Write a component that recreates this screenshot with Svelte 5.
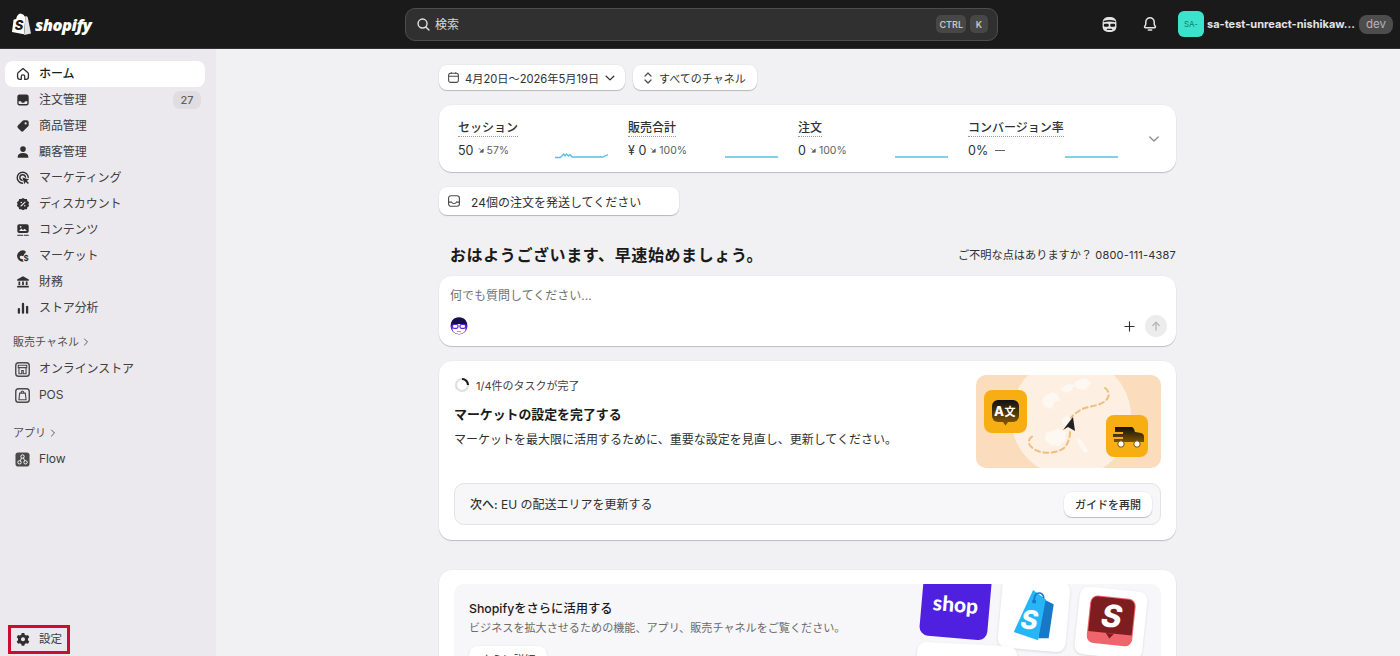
<script>
  const nav = [
    { label: 'ホーム', icon: 'home', active: true },
    { label: '注文管理', icon: 'inbox', badge: '27' },
    { label: '商品管理', icon: 'tag' },
    { label: '顧客管理', icon: 'person' },
    { label: 'マーケティング', icon: 'target' },
    { label: 'ディスカウント', icon: 'discount' },
    { label: 'コンテンツ', icon: 'content' },
    { label: 'マーケット', icon: 'globe' },
    { label: '財務', icon: 'bank' },
    { label: 'ストア分析', icon: 'chart' }
  ];
  const metrics = [
    { label: 'セッション', value: '50', delta: '57%', arrow: true, spark: 'M0 6.5H5L7 5 8.500 3 10 5 11.500 3 13.500 5 15 3.500 17 6H48L53 3.500' },
    { label: '販売合計', value: '¥ 0', delta: '100%', arrow: true, spark: 'M0 6H53' },
    { label: '注文', value: '0', delta: '100%', arrow: true, spark: 'M0 6H53' },
    { label: 'コンバージョン率', value: '0%', delta: '', arrow: false, spark: 'M0 6H53' }
  ];
</script>

{#snippet navIcon(name)}
  <svg class="nav-icon" viewBox="0 0 16 16" aria-hidden="true">
    {#if name === 'home'}
      <path d="M8 1.800 2.300 6.700A1.800 1.800 0 0 0 1.800 8v3.500a2.700 2.700 0 0 0 2.700 2.700H6V11a2 2 0 0 1 4 0v3.200h1.500a2.700 2.700 0 0 0 2.700-2.700V8a1.800 1.800 0 0 0-.5-1.300Z" fill="none" stroke="#303030" stroke-width="1.500" stroke-linejoin="round"/>
    {:else if name === 'inbox'}
      <path d="M4 1.800h8A2.500 2.500 0 0 1 14.500 4.300v7.400A2.500 2.500 0 0 1 12 14.200H4a2.500 2.500 0 0 1-2.500-2.500V4.300A2.500 2.500 0 0 1 4 1.800Z" fill="#303030"/>
      <path d="M3 9.300h2.600c.5 1.200 1.300 1.700 2.400 1.700s1.900-.5 2.400-1.700H13v2.200a1 1 0 0 1-1 1.100H4a1 1 0 0 1-1-1.100Z" fill="#ebe9ed"/>
    {:else if name === 'tag'}
      <path d="M9 1.500h3.200a2.300 2.300 0 0 1 2.300 2.300V7a2 2 0 0 1-.6 1.400l-5.400 5.400a2 2 0 0 1-2.800 0l-3.500-3.500a2 2 0 0 1 0-2.800L7.600 2.100A2 2 0 0 1 9 1.500Z" fill="#303030"/>
      <circle cx="11" cy="5" r="1.200" fill="#ebe9ed"/>
    {:else if name === 'person'}
      <circle cx="8" cy="4.700" r="3.200" fill="#303030"/>
      <path d="M2 13c0-2.400 2.200-4 6-4s6 1.600 6 4v1.500H2Z" fill="#303030"/>
    {:else if name === 'target'}
      <path d="M7.500 14A6.300 6.300 0 1 1 14 7.500" fill="none" stroke="#303030" stroke-width="1.600" stroke-linecap="round"/>
      <path d="M7 10.600A3.200 3.200 0 1 1 10.800 7" fill="none" stroke="#303030" stroke-width="1.600" stroke-linecap="round"/>
      <path d="M7.300 7.300 15 9.700 12.300 11 14.800 13.600 13.500 14.900 11 12.300 9.700 15Z" fill="#303030"/>
    {:else if name === 'discount'}
      <path d="M8 1 10 2.300 12.400 2.300 13 4.500 15 6 14.200 8.200 15 10.400 13 11.600 12.400 13.900 10 13.900 8 15.200 6 13.900 3.600 13.900 3 11.600 1 10.400 1.800 8.200 1 6 3 4.500 3.600 2.300 6 2.300Z" fill="#303030"/>
      <path d="M5.700 10.300 10.300 5.800" stroke="#ebe9ed" stroke-width="1.300" stroke-linecap="round"/>
      <circle cx="6" cy="6.200" r=".9" fill="#ebe9ed"/><circle cx="10" cy="10" r=".9" fill="#ebe9ed"/>
    {:else if name === 'content'}
      <path d="M3.500 1.500h9A2 2 0 0 1 14.500 3.500v6a2 2 0 0 1-2 2h-9a2 2 0 0 1-2-2v-6a2 2 0 0 1 2-2Z" fill="#303030"/>
      <path d="M3.500 9.200 6 6.300 8 8l2-1.500 2.500 2.700Z" fill="#ebe9ed"/><circle cx="5.300" cy="4.300" r="1" fill="#ebe9ed"/>
      <path d="M2 14h5.500M9.500 14H14" stroke="#303030" stroke-width="1.400" stroke-linecap="round"/>
    {:else if name === 'globe'}
      <path d="M10.700 2.200A6.500 6.500 0 1 0 8.800 14.400a4.200 4.200 0 0 1-1.300-2.900c-1.400.3-2.700-.4-3.200-1.700-.4-1.200.5-2.200 1.800-2.200 1 0 1.600.5 2.400.2.800-.4.500-1.200 1-2 .4-.7 1-1.100 1.700-1.400Z" fill="#303030"/>
      <text x="11.600" y="13.600" font-size="9" font-weight="700" text-anchor="middle" fill="#303030" font-family="Inter, sans-serif">$</text>
    {:else if name === 'bank'}
      <path d="M8 1.300 14.700 5v1.500H1.300V5Z" fill="#303030"/>
      <path d="M2.800 7.500h2v4h-2ZM7 7.500h2v4H7ZM11.200 7.500h2v4h-2Z" fill="#303030"/>
      <rect x="1.300" y="12.300" width="13.400" height="2" rx=".6" fill="#303030"/>
    {:else if name === 'chart'}
      <rect x="2" y="8" width="2.600" height="6.500" rx="1.200" fill="#303030"/>
      <rect x="6.700" y="2" width="2.600" height="12.500" rx="1.200" fill="#303030"/>
      <rect x="11.400" y="5.500" width="2.600" height="9" rx="1.200" fill="#303030"/>
    {/if}
  </svg>
{/snippet}

{#snippet caret()}
  <svg class="caret" viewBox="0 0 6 8" aria-hidden="true"><path d="m1.500 1 3 3-3 3" fill="none" stroke="#5a5a5a" stroke-width="1" stroke-linecap="round" stroke-linejoin="round"/></svg>
{/snippet}

<div class="app">
  <header class="topbar">
    <div class="logo">
      <svg class="bag" viewBox="0 0 20 23" aria-hidden="true">
        <path d="M13.500 3.300 12.600 3.600C12.200 2.300 11.500 1.300 10.300 1.300H10C9.600.8 9.200.6 8.800.6 6 .6 4.600 4.100 4.200 5.900L2.200 6.500C1.600 6.700 1.600 6.700 1.500 7.300L0 19 11.900 21.300Z" fill="#fff"/>
        <path d="M14.300 3.200 13.500 3.300 12.100 21.900 19 20.400 15.800 4.500C15.700 3.900 14.800 3.200 14.300 3.200Z" fill="#e3e3e3"/>
        <text x="7.100" y="17.300" font-size="13" font-weight="800" font-style="italic" fill="#1a1a1a" text-anchor="middle" font-family="Inter, sans-serif">S</text>
      </svg>
      <span class="wordmark">shopify</span>
    </div>
    <div class="search">
      <svg class="search-icon" viewBox="0 0 16 16" aria-hidden="true"><circle cx="7" cy="7" r="4.800" fill="none" stroke="#e3e3e3" stroke-width="1.500"/><path d="m10.600 10.600 3.200 3.200" stroke="#e3e3e3" stroke-width="1.500" stroke-linecap="round"/></svg>
      <span class="search-text">検索</span>
      <span class="key">CTRL</span>
      <span class="key key-k">K</span>
    </div>
    <div class="top-right">
      <svg class="sidekick" viewBox="0 0 16 16" aria-hidden="true">
        <path d="M8 1c4.200 0 6.500 1.700 6.500 5.500v3.500c0 3.200-2.600 5-6.500 5s-6.500-1.800-6.500-5V6.500C1.500 2.700 3.800 1 8 1Z" fill="#e3e3e3"/>
        <path d="M2.500 5.300c3.500-1 7.500-1 11 0" stroke="#1a1a1a" stroke-width="1.400" fill="none"/>
        <rect x="2.700" y="7.200" width="4.600" height="3" rx="1.200" fill="#1a1a1a"/>
        <rect x="8.700" y="7.200" width="4.600" height="3" rx="1.200" fill="#1a1a1a"/>
        <path d="M5.500 12.600h5" stroke="#1a1a1a" stroke-width="1.100"/>
      </svg>
      <svg class="bell" viewBox="0 0 16 16" aria-hidden="true">
        <path d="M8 1.800a4.200 4.200 0 0 0-4.200 4.200v1.800c0 1-.4 1.700-1 2.500-.5.700-.2 1.400.6 1.400h9.200c.8 0 1.100-.7.600-1.400-.6-.8-1-1.500-1-2.500V6A4.200 4.200 0 0 0 8 1.800Z" fill="none" stroke="#e3e3e3" stroke-width="1.500"/>
        <path d="M6.300 14h3.400" stroke="#e3e3e3" stroke-width="1.500" stroke-linecap="round"/>
      </svg>
      <span class="avatar">SA-</span>
      <span class="store">sa-test-unreact-nishikaw...</span>
      <span class="dev">dev</span>
    </div>
  </header>

  <div class="body">
    <aside class="sidebar">
      <nav class="nav-group">
        {#each nav as item}
          <div class="nav-item" class:active={item.active}>
            {@render navIcon(item.icon)}
            <span class="nav-label">{item.label}</span>
            {#if item.badge}<span class="badge">{item.badge}</span>{/if}
          </div>
        {/each}
      </nav>

      <div class="section-head first">販売チャネル {@render caret()}</div>
      <div class="nav-item">
        <svg class="nav-icon app-icon" viewBox="0 0 16 16" aria-hidden="true">
          <rect x=".8" y=".8" width="14.400" height="14.400" rx="3" fill="none" stroke="#4a4a4a" stroke-width="1.500"/>
          <path d="M3.500 3.500h9v2.500h-9ZM4.200 6v6.500h3V9h1.600v3.500h3V6" fill="none" stroke="#4a4a4a" stroke-width="1.200"/>
        </svg>
        <span class="nav-label">オンラインストア</span>
      </div>
      <div class="nav-item">
        <svg class="nav-icon app-icon" viewBox="0 0 16 16" aria-hidden="true">
          <rect x=".8" y=".8" width="14.400" height="14.400" rx="3" fill="none" stroke="#4a4a4a" stroke-width="1.500"/>
          <path d="M5 5.500h6l.8 7H4.200ZM6.500 5.500c0-3 3-3 3 0" fill="none" stroke="#4a4a4a" stroke-width="1.200"/>
        </svg>
        <span class="nav-label latin">POS</span>
      </div>

      <div class="section-head second">アプリ {@render caret()}</div>
      <div class="nav-item">
        <svg class="nav-icon app-icon" viewBox="0 0 16 16" aria-hidden="true">
          <rect x=".5" y=".5" width="15" height="15" rx="3" fill="#4a4a4a"/>
          <circle cx="8" cy="4.800" r="1.800" fill="none" stroke="#fff" stroke-width="1"/>
          <circle cx="4.800" cy="11" r="1.800" fill="none" stroke="#fff" stroke-width="1"/>
          <circle cx="11.200" cy="11" r="1.800" fill="none" stroke="#fff" stroke-width="1"/>
          <path d="M7 6.400 5.600 9.400M9 6.400l1.400 3" stroke="#fff" stroke-width="1"/>
        </svg>
        <span class="nav-label latin">Flow</span>
      </div>

      <div class="settings">
        <svg class="nav-icon gear" viewBox="0 0 16 16" aria-hidden="true">
          <path fill-rule="evenodd" d="M6.500 1h3l.5 2 1.700 1 2-.6 1.500 2.600-1.500 1.400v2l1.500 1.400-1.500 2.600-2-.6-1.700 1-.5 2h-3l-.5-2-1.700-1-2 .6L.8 10.800l1.500-1.400v-2L.8 6l1.500-2.600 2 .6 1.700-1ZM8 6a2.300 2.300 0 1 0 0 4.600A2.300 2.300 0 0 0 8 6Z" fill="#303030"/>
        </svg>
        <span class="nav-label">設定</span>
      </div>
    </aside>

    <main class="main">
      <div class="filters">
        <button class="pill date">
          <svg class="pill-icon" viewBox="0 0 16 16" aria-hidden="true"><rect x="2" y="2.800" width="12" height="11.200" rx="2.500" fill="none" stroke="#4a4a4a" stroke-width="1.300"/><path d="M2 6.500h12M5.300 1.500v2M10.700 1.500v2" stroke="#4a4a4a" stroke-width="1.300"/></svg>
          <span>4月20日〜2026年5月19日</span>
          <svg class="chev" viewBox="0 0 12 12" aria-hidden="true"><path d="m2.200 4.300 3.800 3.600 3.800-3.600" fill="none" stroke="#303030" stroke-width="1.300" stroke-linecap="round" stroke-linejoin="round"/></svg>
        </button>
        <button class="pill channel">
          <svg class="updown" viewBox="0 0 12 14" aria-hidden="true"><path d="m3 5 3-3 3 3M3 9l3 3 3-3" fill="none" stroke="#4a4a4a" stroke-width="1.200" stroke-linecap="round" stroke-linejoin="round"/></svg>
          <span>すべてのチャネル</span>
        </button>
      </div>

      <section class="card metrics">
        {#each metrics as m}
          <div class="metric">
            <div class="metric-text">
              <span class="metric-label">{m.label}</span>
              <div class="metric-value">
                <span class="val">{m.value}</span>
                {#if m.arrow}
                  <svg class="down" viewBox="0 0 8 8" aria-hidden="true"><path d="M1 1.500 6 6.500M7 2.500v4.500H2.500Z" fill="#616161" stroke="#616161" stroke-width="1"/></svg>
                  <span class="delta">{m.delta}</span>
                {:else}
                  <span class="dash"></span>
                {/if}
              </div>
            </div>
            <svg class="spark" viewBox="0 0 53 8" aria-hidden="true"><path d={m.spark} fill="none" stroke="#56bfe6" stroke-width="1.300"/></svg>
          </div>
        {/each}
        <svg class="metrics-chev" viewBox="0 0 12 12" aria-hidden="true"><path d="m1.800 4 4.200 4 4.200-4" fill="none" stroke="#8a8a8a" stroke-width="1.300" stroke-linecap="round" stroke-linejoin="round"/></svg>
      </section>

      <button class="pill alert">
        <svg class="pill-icon alert-icon" viewBox="0 0 16 16" aria-hidden="true"><rect x="1.800" y="2" width="12.400" height="12" rx="2.800" fill="none" stroke="#4a4a4a" stroke-width="1.300"/><path d="M2 9.300h3.200c.4 1 1.500 1.500 2.800 1.500s2.400-.5 2.800-1.500H14" fill="none" stroke="#4a4a4a" stroke-width="1.300"/></svg>
        <span>24個の注文を発送してください</span>
      </button>

      <div class="greeting">
        <h1>おはようございます、早速始めましょう。</h1>
        <span class="help">ご不明な点はありますか？ <span class="phone">0800-111-4387</span></span>
      </div>

      <section class="card ask">
        <div class="placeholder">何でも質問してください...</div>
        <div class="ask-row">
          <svg class="face" viewBox="0 0 18 18" aria-hidden="true">
            <circle cx="9" cy="9" r="8.500" fill="#5b21d9"/>
            <path d="M1 8.500C1 3 4 .5 9 .5s8 2.500 8 8c-4-2-12-2-16 0Z" fill="#15104a"/>
            <ellipse cx="9" cy="12" rx="6.500" ry="5" fill="#fff"/>
            <rect x="2.500" y="7.500" width="5.500" height="3.800" rx="1.500" fill="#fff" stroke="#5b21d9" stroke-width="1.200"/>
            <rect x="10" y="7.500" width="5.500" height="3.800" rx="1.500" fill="#fff" stroke="#5b21d9" stroke-width="1.200"/>
            <path d="M7 14.500h4" stroke="#888" stroke-width=".8"/>
          </svg>
          <span class="grow"></span>
          <svg class="plus" viewBox="0 0 12 12" aria-hidden="true"><path d="M6 1v10M1 6h10" stroke="#303030" stroke-width="1.200" stroke-linecap="round"/></svg>
          <span class="send"><svg viewBox="0 0 12 12" aria-hidden="true"><path d="M6 10V2.500M2.800 5.500 6 2.300l3.200 3.200" fill="none" stroke="#b5b5b5" stroke-width="1.300" stroke-linecap="round" stroke-linejoin="round"/></svg></span>
        </div>
      </section>

      <section class="card task">
        <div class="task-top">
          <div class="task-copy">
            <div class="progress">
              <svg class="ring" viewBox="0 0 16 16" aria-hidden="true">
                <circle cx="8" cy="8" r="6" fill="none" stroke="#e0e0e0" stroke-width="2.200"/>
                <path d="M8 2a6 6 0 0 1 6 6" fill="none" stroke="#1a1a1a" stroke-width="2.200"/>
              </svg>
              <span>1/4件のタスクが完了</span>
            </div>
            <h2>マーケットの設定を完了する</h2>
            <p>マーケットを最大限に活用するために、重要な設定を見直し、更新してください。</p>
          </div>
          <svg class="illustration" viewBox="0 0 185 93" aria-hidden="true">
            <defs>
              <clipPath id="ill"><rect width="185" height="93" rx="10"/></clipPath>
              <linearGradient id="glyph" x1="0" y1="0" x2="0" y2="1"><stop offset="0" stop-color="#111"/><stop offset="1" stop-color="#7a5200"/></linearGradient>
            </defs>
            <g clip-path="url(#ill)">
              <rect width="185" height="93" fill="#fbdcbc"/>
              <circle cx="95" cy="42" r="60" fill="#fdf0e2"/>
              <g fill="#fff" opacity=".55">
                <path d="M68 22l8-5 5 2 3 6-6 3-2 6-7-2-3-5ZM84 14l8-5 6 1-2 5-6 3ZM100 6l10-3 5 5-6 7-7-1-4-4ZM70 58l12-4 8 3-1 8-6 6-8-1-6-5ZM100 62l6 4 6 10-3 2-6-7ZM86 44l5-3 4 2-2 6-6 1Z"/>
              </g>
              <path d="M129 13c6 4 5 12-5 16-8 3-16 3-21 7-3 2-6 4-8 7M94 57c0 6-2 11-5 15-5 5-15 7-24 5-7-2-13-6-12-11 0-2 2-4 4-5" fill="none" stroke="#efbd80" stroke-width="2" stroke-dasharray="5 3.500" stroke-linecap="round"/>
              <path d="M97 42 99 56 92 52 87 55Z" fill="#222"/>
              <rect x="8" y="15" width="43" height="43" rx="8" fill="#f7ae12"/>
              <rect x="16" y="25" width="27" height="22" rx="6" fill="url(#glyph)"/>
              <path d="M27 47h5l-2.500 3.500Z" fill="#7a5200"/>
              <text x="23" y="41" font-size="13" font-weight="800" fill="#fff" text-anchor="middle" font-family="Inter, sans-serif">A</text>
              <text x="34" y="41" font-size="11" font-weight="700" fill="#fff" text-anchor="middle" font-family="'Noto Sans CJK JP', sans-serif">文</text>
              <rect x="130" y="40" width="42" height="42" rx="8" fill="#f7ae12"/>
              <path d="M139 52h16c2 0 3 1 4 5l6 1c2 .5 3 2 3 4v5h-30v-3h9v-2h-10v-3h10v-2h-8Z" fill="url(#glyph)"/>
              <circle cx="145" cy="69" r="3.200" fill="#fff" stroke="#7a5200"/><circle cx="161" cy="69" r="3.200" fill="#fff" stroke="#7a5200"/>
            </g>
          </svg>
        </div>
        <div class="next">
          <span class="next-text"><b>次へ:</b> EU の配送エリアを更新する</span>
          <button class="pill guide">ガイドを再開</button>
        </div>
      </section>

      <section class="card more">
        <div class="more-inner">
          <div class="more-copy">
            <h3>Shopifyをさらに活用する</h3>
            <p>ビジネスを拡大させるための機能、アプリ、販売チャネルをご覧ください。</p>
            <button class="pill explore">さらに詳細</button>
          </div>
          <div class="tile shop"><span>shop</span></div>
          <div class="tile tile-white shopify-tile">
            <svg viewBox="0 0 40 52" aria-hidden="true">
              <path d="M28 10 38 14 36 47 26 48Z" fill="#1878c8"/>
              <path d="M17 2 30 10 26 50 2 44Z" fill="#27b6f5"/>
              <path d="M19 12c-1-9 8-10 9-3" fill="none" stroke="#1878c8" stroke-width="1.600"/>
              <circle cx="19" cy="13" r="2" fill="#1878c8"/>
              <text x="16" y="40" font-size="25" font-weight="800" font-style="italic" fill="#fff" text-anchor="middle" font-family="Inter, sans-serif">S</text>
            </svg>
          </div>
          <div class="tile tile-white red-tile">
            <svg viewBox="0 0 46 52" aria-hidden="true">
              <rect x="1" y="1" width="44" height="46" rx="7" fill="#f0646c"/>
              <path d="M2 8a6 6 0 0 1 6-6h30a6 6 0 0 1 6 6v28H2Z" fill="#7e1d1f"/>
              <path d="M19 36h8l-4 5Z" fill="#7e1d1f"/>
              <text x="23" y="30" font-size="30" font-weight="800" font-style="italic" fill="#fff" text-anchor="middle" font-family="Inter, sans-serif">S</text>
            </svg>
          </div>
          <div class="tile tile-white bottom-tile"></div>
        </div>
      </section>
    </main>
  </div>
</div>

<style>
  :global(body) {
    margin: 0;
    background: #f1f0f2;
  }
  .app {
    width: 1400px;
    height: 656px;
    overflow: hidden;
    display: flex;
    flex-direction: column;
    font-family: Inter, "Noto Sans CJK JP", sans-serif;
    color: #303030;
    font-size: 12px;
  }
  .topbar {
    height: 49px;
    flex: none;
    background: #1a1a1a;
    display: flex;
    align-items: center;
    position: relative;
    border-bottom: 1px solid #333;
    box-sizing: border-box;
  }
  .logo {
    width: 405px;
    flex: none;
    display: flex;
    align-items: center;
    padding-left: 12px;
    box-sizing: border-box;
    gap: 3px;
  }
  .bag {
    width: 20px;
    height: 23px;
  }
  .wordmark {
    color: #fff;
    font-family: "Open Sans", sans-serif;
    font-weight: 800;
    font-style: italic;
    font-size: 16.500px;
    letter-spacing: -0.500px;
  }
  .search {
    width: 593px;
    height: 33px;
    flex: none;
    box-sizing: border-box;
    background: #303030;
    border: 1px solid #4d4d4d;
    border-radius: 10px;
    display: flex;
    align-items: center;
    padding: 0 9px 0 10px;
    gap: 3px;
  }
  .search-icon {
    width: 15px;
    height: 15px;
    margin-right: 1px;
  }
  .search-text {
    color: #d8d8d8;
    font-size: 12px;
    flex: 1;
    padding-bottom: 2px;
  }
  .key {
    background: #474747;
    color: #c4c4c4;
    font-size: 9px;
    font-weight: 600;
    height: 18px;
    min-width: 18px;
    padding: 0 3px;
    box-sizing: border-box;
    border-radius: 5px;
    display: flex;
    align-items: center;
    justify-content: center;
  }
  .key-k {
    margin-left: 1px;
  }
  .top-right {
    display: flex;
    align-items: center;
    margin-left: 103px;
  }
  .sidekick {
    width: 17px;
    height: 17px;
  }
  .bell {
    width: 16px;
    height: 16px;
    margin-left: 24px;
  }
  .avatar {
    width: 26px;
    height: 26px;
    margin-left: 20px;
    border-radius: 6px;
    background: #3be3cc;
    color: #14806f;
    font-size: 8px;
    display: flex;
    align-items: center;
    justify-content: center;
  }
  .store {
    color: #e3e3e3;
    font-weight: 700;
    font-size: 11px;
    margin-left: 3px;
    white-space: nowrap;
    width: 152px;
  }
  .dev {
    background: #4d4d4d;
    color: #b5b5b5;
    font-size: 11.500px;
    height: 19px;
    width: 34px;
    border-radius: 8px;
    display: flex;
    align-items: center;
    justify-content: center;
  }
  .body {
    flex: 1;
    display: flex;
    min-height: 0;
  }
  .sidebar {
    width: 216px;
    flex: none;
    background: #ebe9ed;
    padding: 12px 11px 2px 5px;
    box-sizing: border-box;
    display: flex;
    flex-direction: column;
  }
  .nav-group {
    display: flex;
    flex-direction: column;
  }
  .nav-item {
    height: 26px;
    flex: none;
    display: flex;
    align-items: center;
    padding: 0 4px 0 11px;
    border-radius: 8px;
    font-size: 12px;
    color: #404040;
  }
  .nav-item.active {
    background: #fff;
    color: #1a1a1a;
    font-weight: 500;
  }
  .nav-icon {
    width: 14px;
    height: 14px;
    flex: none;
    margin-right: 9px;
  }
  .app-icon {
    width: 15px;
    height: 15px;
    margin-left: -1px;
  }
  .nav-label {
    flex: 1;
    white-space: nowrap;
    letter-spacing: -0.100px;
    padding-bottom: 3px;
  }
  .nav-label.latin {
    padding-bottom: 2px;
  }
  .badge {
    background: #dfdde1;
    color: #616161;
    font-size: 11px;
    font-weight: 500;
    border-radius: 7px;
    width: 28px;
    height: 18px;
    display: flex;
    align-items: center;
    justify-content: center;
  }
  .section-head {
    height: 16px;
    padding-left: 8px;
    font-size: 11px;
    color: #4f4f4f;
    display: flex;
    align-items: center;
    gap: 4px;
  }
  .section-head.first {
    margin: 12px 0 7px;
  }
  .section-head.second {
    margin: 16px 0 6px;
  }
  .caret {
    width: 6px;
    height: 8px;
    margin-top: 2px;
  }
  .settings {
    margin-top: auto;
    margin-left: 3px;
    width: 62px;
    height: 29px;
    box-sizing: border-box;
    border: 3px solid #c80f2e;
    display: flex;
    align-items: center;
    padding-left: 5px;
    font-size: 11.500px;
    color: #404040;
  }
  .gear {
    margin-right: 9px;
    margin-bottom: 1px;
  }
  .main {
    flex: 1;
    min-width: 0;
    padding: 16px 0 0 223px;
    box-sizing: border-box;
    display: flex;
    flex-direction: column;
    align-items: flex-start;
    overflow: hidden;
  }
  .filters {
    display: flex;
    gap: 8px;
    height: 25px;
    flex: none;
  }
  .pill {
    font: inherit;
    color: #303030;
    background: #fff;
    border: 0;
    border-radius: 8px;
    box-shadow: 0 1px 1px rgba(0, 0, 0, 0.22), 0 0 0 0.500px rgba(0, 0, 0, 0.05);
    display: flex;
    align-items: center;
    padding: 0;
    white-space: nowrap;
    flex: none;
  }
  .date {
    width: 186px;
    padding-left: 8px;
    font-size: 11.200px;
  }
  .pill-icon {
    width: 13px;
    height: 13px;
    margin-right: 5px;
  }
  .chev {
    width: 12px;
    height: 12px;
    margin-left: 5px;
  }
  .channel {
    width: 124px;
    padding-left: 9px;
    font-size: 11px;
  }
  .updown {
    width: 12px;
    height: 14px;
    margin-right: 5px;
  }
  .card {
    background: #fff;
    width: 737px;
    flex: none;
    border-radius: 13px;
    box-shadow: 0 1px 1px rgba(0, 0, 0, 0.2), 0 0 0 0.500px rgba(0, 0, 0, 0.03);
    box-sizing: border-box;
  }
  .metrics {
    margin-top: 15px;
    height: 67px;
    display: flex;
    padding: 15px 0 0 19px;
    position: relative;
  }
  .metric {
    width: 170px;
    height: 40px;
    flex: none;
    position: relative;
    display: flex;
  }
  .metric-text {
    display: flex;
    flex-direction: column;
    align-items: flex-start;
  }
  .metric-label {
    font-size: 12px;
    font-weight: 500;
    line-height: 15px;
    color: #303030;
    padding-bottom: 1px;
    border-bottom: 1px dotted #9a9a9a;
    white-space: nowrap;
  }
  .metric-value {
    display: flex;
    align-items: center;
    margin-top: 6px;
    height: 14px;
  }
  .val {
    font-size: 12.500px;
    color: #303030;
  }
  .down {
    width: 6px;
    height: 6px;
    margin: 0 3px 0 4px;
  }
  .delta {
    font-size: 10.500px;
    color: #616161;
  }
  .dash {
    width: 10px;
    height: 1px;
    background: #616161;
    margin-left: 7px;
  }
  .spark {
    position: absolute;
    left: 97px;
    top: 31px;
    width: 53px;
    height: 8px;
  }
  .metrics-chev {
    position: absolute;
    right: 16px;
    top: 28px;
    width: 12px;
    height: 12px;
  }
  .alert {
    margin-top: 15px;
    width: 240px;
    height: 28px;
    padding-left: 8px;
    font-size: 12px;
  }
  .alert-icon {
    width: 14px;
    height: 14px;
    margin-right: 10px;
  }
  .greeting {
    width: 737px;
    height: 61px;
    display: flex;
    align-items: center;
    justify-content: space-between;
    padding: 16px 0 0 11px;
    box-sizing: border-box;
    flex: none;
  }
  h1 {
    margin: 0;
    font-size: 16px;
    font-weight: 600;
    letter-spacing: 0.600px;
    color: #1a1a1a;
  }
  .help {
    font-size: 11.200px;
    color: #303030;
  }
  .phone {
    font-size: 11px;
    letter-spacing: 0.200px;
  }
  .ask {
    height: 70px;
    padding: 11px 9px 0 11px;
  }
  .placeholder {
    font-size: 12px;
    color: #6f6f6f;
    line-height: 18px;
  }
  .ask-row {
    display: flex;
    align-items: center;
    margin-top: 10px;
    height: 22px;
  }
  .face {
    width: 18px;
    height: 18px;
  }
  .grow {
    flex: 1;
  }
  .plus {
    width: 11px;
    height: 11px;
    margin-right: 10px;
  }
  .send {
    width: 22px;
    height: 22px;
    border-radius: 50%;
    background: #ececec;
    display: flex;
    align-items: center;
    justify-content: center;
  }
  .send svg {
    width: 12px;
    height: 12px;
  }
  .task {
    margin-top: 15px;
    height: 179px;
    padding: 14px 15px 0;
  }
  .task-top {
    display: flex;
    justify-content: space-between;
    height: 93px;
  }
  .progress {
    display: flex;
    align-items: center;
    gap: 6px;
    font-size: 11px;
    height: 19px;
    color: #404040;
  }
  .ring {
    width: 16px;
    height: 16px;
    margin-top: 1px;
  }
  h2 {
    margin: 12px 0 0;
    font-size: 12.900px;
    font-weight: 600;
    color: #1a1a1a;
    line-height: 18px;
  }
  .task-copy p {
    margin: 7px 0 0;
    font-size: 12px;
    line-height: 18px;
    color: #303030;
  }
  .illustration {
    width: 185px;
    height: 93px;
    flex: none;
  }
  .next {
    margin-top: 15px;
    height: 42px;
    border-radius: 10px;
    background: #f7f6f8;
    border: 1px solid #e3e3e3;
    box-sizing: border-box;
    display: flex;
    align-items: center;
    justify-content: space-between;
    padding: 0 8px 0 15px;
  }
  .next-text {
    font-size: 12px;
    color: #303030;
    padding-bottom: 2px;
  }
  .next-text b {
    font-weight: 500;
  }
  .guide {
    width: 88px;
    height: 25px;
    justify-content: center;
    font-size: 11px;
    font-weight: 500;
  }
  .more {
    margin-top: 30px;
    height: 130px;
    padding: 14px 15px;
    flex: none;
  }
  .more-inner {
    position: relative;
    height: 120px;
    background: #f7f6f8;
    border-radius: 10px;
    overflow: hidden;
    padding: 16px 15px;
    box-sizing: border-box;
  }
  h3 {
    margin: 0;
    font-size: 12.300px;
    font-weight: 500;
    line-height: 18px;
    color: #1a1a1a;
  }
  .more-copy p {
    margin: 3px 0 0;
    font-size: 11.100px;
    line-height: 14px;
    color: #6a6a6a;
  }
  .explore {
    margin-top: 11px;
    width: 78px;
    height: 25px;
    justify-content: center;
    font-size: 11px;
  }
  .tile {
    position: absolute;
    border-radius: 9px;
  }
  .tile-white {
    background: #fff;
    box-shadow: 0 1px 3px rgba(0, 0, 0, 0.12);
    display: flex;
    align-items: center;
    justify-content: center;
  }
  .shop {
    left: 468px;
    top: -22px;
    width: 68px;
    height: 76px;
    background: #4f20e0;
    transform: rotate(5deg);
    color: #fff;
    display: flex;
    align-items: flex-end;
    justify-content: center;
    padding-bottom: 22px;
    box-sizing: border-box;
    font-family: Lato, sans-serif;
    font-weight: 900;
    font-size: 21px;
  }
  .shopify-tile {
    left: 546px;
    top: -4px;
    width: 68px;
    height: 70px;
    transform: rotate(5deg);
  }
  .shopify-tile svg {
    width: 42px;
    height: 54px;
  }
  .red-tile {
    left: 623px;
    top: 5px;
    width: 68px;
    height: 68px;
    transform: rotate(6deg);
  }
  .red-tile svg {
    width: 48px;
    height: 54px;
  }
  .bottom-tile {
    left: 462px;
    top: 60px;
    width: 100px;
    height: 60px;
    transform: rotate(3deg);
  }
</style>
